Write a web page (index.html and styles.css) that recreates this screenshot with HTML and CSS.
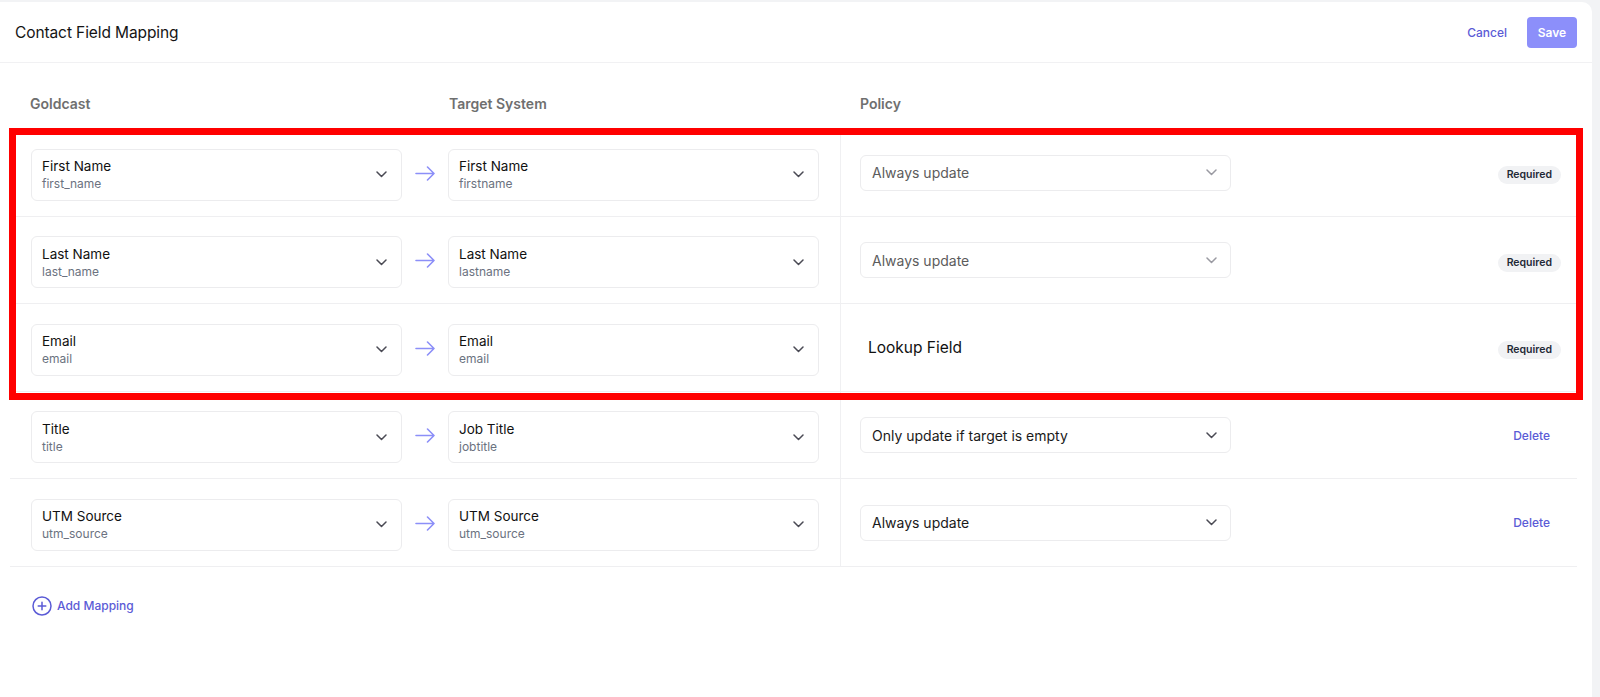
FILE: index.html
```html
<!DOCTYPE html>
<html lang="en">
<head>
<meta charset="utf-8">
<title>Contact Field Mapping</title>
<link rel="stylesheet" href="styles.css">
</head>
<body>
<div class="card">
  <header class="topbar">
    <h1 class="title">Contact Field Mapping</h1>
    <div class="actions">
      <button class="link-btn">Cancel</button>
      <button class="save-btn">Save</button>
    </div>
  </header>

  <section class="table">
    <div class="thead">
      <div class="th th-src">Goldcast</div>
      <div class="th th-tgt">Target System</div>
      <div class="th th-pol">Policy</div>
    </div>

    <div class="rows">
      <div class="highlight"></div>

      <div class="row">
        <div class="cell cell-src">
          <div class="select"><div class="sel-text"><div class="sel-main">First Name</div><div class="sel-sub">first_name</div></div><svg class="chev" width="11" height="7" viewBox="0 0 11 7"><path d="M1 1l4.5 4.5L10 1" /></svg></div>
        </div>
        <div class="cell cell-arrow"><svg class="arrow" width="21" height="15" viewBox="0 0 21 15"><path d="M1 7.5h18M12.5 1l6.5 6.5-6.5 6.5" /></svg></div>
        <div class="cell cell-tgt">
          <div class="select"><div class="sel-text"><div class="sel-main">First Name</div><div class="sel-sub">firstname</div></div><svg class="chev" width="11" height="7" viewBox="0 0 11 7"><path d="M1 1l4.5 4.5L10 1" /></svg></div>
        </div>
        <div class="cell cell-pol">
          <div class="policy-select muted"><span>Always update</span><svg class="chev light" width="11" height="7" viewBox="0 0 11 7"><path d="M1 1l4.5 4.5L10 1" /></svg></div>
          <span class="badge">Required</span>
        </div>
      </div>

      <div class="row">
        <div class="cell cell-src">
          <div class="select"><div class="sel-text"><div class="sel-main">Last Name</div><div class="sel-sub">last_name</div></div><svg class="chev" width="11" height="7" viewBox="0 0 11 7"><path d="M1 1l4.5 4.5L10 1" /></svg></div>
        </div>
        <div class="cell cell-arrow"><svg class="arrow" width="21" height="15" viewBox="0 0 21 15"><path d="M1 7.5h18M12.5 1l6.5 6.5-6.5 6.5" /></svg></div>
        <div class="cell cell-tgt">
          <div class="select"><div class="sel-text"><div class="sel-main">Last Name</div><div class="sel-sub">lastname</div></div><svg class="chev" width="11" height="7" viewBox="0 0 11 7"><path d="M1 1l4.5 4.5L10 1" /></svg></div>
        </div>
        <div class="cell cell-pol">
          <div class="policy-select muted"><span>Always update</span><svg class="chev light" width="11" height="7" viewBox="0 0 11 7"><path d="M1 1l4.5 4.5L10 1" /></svg></div>
          <span class="badge">Required</span>
        </div>
      </div>

      <div class="row">
        <div class="cell cell-src">
          <div class="select"><div class="sel-text"><div class="sel-main">Email</div><div class="sel-sub">email</div></div><svg class="chev" width="11" height="7" viewBox="0 0 11 7"><path d="M1 1l4.5 4.5L10 1" /></svg></div>
        </div>
        <div class="cell cell-arrow"><svg class="arrow" width="21" height="15" viewBox="0 0 21 15"><path d="M1 7.5h18M12.5 1l6.5 6.5-6.5 6.5" /></svg></div>
        <div class="cell cell-tgt">
          <div class="select"><div class="sel-text"><div class="sel-main">Email</div><div class="sel-sub">email</div></div><svg class="chev" width="11" height="7" viewBox="0 0 11 7"><path d="M1 1l4.5 4.5L10 1" /></svg></div>
        </div>
        <div class="cell cell-pol">
          <div class="lookup">Lookup Field</div>
          <span class="badge">Required</span>
        </div>
      </div>

      <div class="row">
        <div class="cell cell-src">
          <div class="select"><div class="sel-text"><div class="sel-main">Title</div><div class="sel-sub">title</div></div><svg class="chev" width="11" height="7" viewBox="0 0 11 7"><path d="M1 1l4.5 4.5L10 1" /></svg></div>
        </div>
        <div class="cell cell-arrow"><svg class="arrow" width="21" height="15" viewBox="0 0 21 15"><path d="M1 7.5h18M12.5 1l6.5 6.5-6.5 6.5" /></svg></div>
        <div class="cell cell-tgt">
          <div class="select"><div class="sel-text"><div class="sel-main">Job Title</div><div class="sel-sub">jobtitle</div></div><svg class="chev" width="11" height="7" viewBox="0 0 11 7"><path d="M1 1l4.5 4.5L10 1" /></svg></div>
        </div>
        <div class="cell cell-pol">
          <div class="policy-select"><span>Only update if target is empty</span><svg class="chev" width="11" height="7" viewBox="0 0 11 7"><path d="M1 1l4.5 4.5L10 1" /></svg></div>
          <button class="link-btn delete">Delete</button>
        </div>
      </div>

      <div class="row">
        <div class="cell cell-src">
          <div class="select"><div class="sel-text"><div class="sel-main">UTM Source</div><div class="sel-sub">utm_source</div></div><svg class="chev" width="11" height="7" viewBox="0 0 11 7"><path d="M1 1l4.5 4.5L10 1" /></svg></div>
        </div>
        <div class="cell cell-arrow"><svg class="arrow" width="21" height="15" viewBox="0 0 21 15"><path d="M1 7.5h18M12.5 1l6.5 6.5-6.5 6.5" /></svg></div>
        <div class="cell cell-tgt">
          <div class="select"><div class="sel-text"><div class="sel-main">UTM Source</div><div class="sel-sub">utm_source</div></div><svg class="chev" width="11" height="7" viewBox="0 0 11 7"><path d="M1 1l4.5 4.5L10 1" /></svg></div>
        </div>
        <div class="cell cell-pol">
          <div class="policy-select"><span>Always update</span><svg class="chev" width="11" height="7" viewBox="0 0 11 7"><path d="M1 1l4.5 4.5L10 1" /></svg></div>
          <button class="link-btn delete">Delete</button>
        </div>
      </div>
    </div>

    <div class="add-row">
      <button class="add-btn">
        <svg class="plus" width="20" height="20" viewBox="0 0 20 20"><circle cx="10" cy="10" r="9" /><path d="M10 6.2v7.6M6.2 10h7.6" /></svg>
        <span>Add Mapping</span>
      </button>
    </div>
  </section>
</div>
</body>
</html>
```

FILE: styles.css
```css
* { box-sizing: border-box; }

html, body {
  margin: 0;
  height: 100%;
}

body {
  background: #f2f3f5;
  padding: 2px 8px 0 0;
  font-family: Inter, "Noto Sans", "Liberation Sans", sans-serif;
  color: #111111;
}

button {
  font-family: inherit;
  border: 0;
  background: none;
  padding: 0;
  cursor: pointer;
}

.card {
  background: #ffffff;
  height: 695px;
  border-top-right-radius: 10px;
}

.topbar {
  height: 61px;
  border-bottom: 1px solid #f1f1f3;
  display: flex;
  align-items: center;
  justify-content: space-between;
  padding: 0 15px 0 15px;
}

.title {
  margin: 0;
  font-size: 15.5px;
  font-weight: 400;
  color: #141414;
  letter-spacing: -0.1px;
}

.actions {
  display: flex;
  align-items: center;
  gap: 20px;
}

.link-btn {
  color: #5b5bd6;
  font-size: 12px;
  font-weight: 500;
}

.save-btn {
  width: 50px;
  height: 31px;
  border-radius: 4px;
  background: #8c8ffa;
  color: #ffffff;
  font-size: 12px;
  font-weight: 600;
}

.table {
  margin: 0 15px 0 10px;
}

.thead {
  height: 66px;
  display: flex;
  padding-top: 32px;
  font-size: 14px;
  font-weight: 600;
  color: #6f6f6f;
  line-height: 17px;
}

.th-src { width: 439px; padding-left: 20px; }
.th-tgt { width: 411px; padding-left: 0; }
.th-pol { flex: 1; }

.rows {
  position: relative;
}

.highlight {
  position: absolute;
  left: -1px;
  top: -1px;
  width: 1574px;
  height: 272px;
  border: 7px solid #ff0000;
  pointer-events: none;
  z-index: 2;
}

.row {
  height: 87.5px;
  display: flex;
  align-items: stretch;
  border-bottom: 1px solid #efeff1;
  padding: 0 16px 0 21px;
}

.cell {
  display: flex;
  align-items: center;
}

.cell-src, .cell-tgt {
  width: 371px;
  padding-top: 5px;
}

.cell-arrow {
  width: 46px;
  justify-content: center;
  padding-top: 2px;
}

.cell-pol {
  flex: 1;
  margin-left: 21px;
  border-left: 1px solid #f0f0f2;
  padding: 1px 0 0 19px;
  justify-content: space-between;
}

.select {
  width: 371px;
  height: 52px;
  border: 1px solid #ececee;
  border-radius: 6px;
  display: flex;
  align-items: center;
  justify-content: space-between;
  padding: 0 14px 0 10px;
}

.sel-text {
  padding-top: 1px;
}

.sel-main {
  font-size: 13.5px;
  line-height: 17px;
  color: #111111;
}

.sel-sub {
  font-size: 12px;
  line-height: 17px;
  color: #6b7280;
}

.chev path {
  fill: none;
  stroke: #4b4b55;
  stroke-width: 1.5;
  stroke-linecap: round;
  stroke-linejoin: round;
}

.chev.light path { stroke: #9a9aa2; }

.arrow path {
  fill: none;
  stroke: #8c8ff8;
  stroke-width: 1.6;
  stroke-linecap: round;
  stroke-linejoin: round;
}

.policy-select {
  width: 371px;
  height: 36px;
  border: 1px solid #ececee;
  border-radius: 6px;
  display: flex;
  align-items: center;
  justify-content: space-between;
  padding: 0 13px 0 11px;
  font-size: 14px;
  color: #1a1a1a;
}

.policy-select.muted { color: #5c5c5c; }

.lookup {
  font-size: 15.5px;
  color: #111111;
  padding-left: 8px;
}

.badge {
  height: 18px;
  line-height: 18px;
  margin-top: 5px;
  padding: 0 9px;
  border-radius: 9px;
  background: #f1f2f4;
  color: #1f2937;
  font-size: 10.5px;
  font-weight: 600;
}

.delete {
  margin-right: 11px;
}

.add-row {
  padding: 29px 0 0 22px;
}

.add-btn {
  display: flex;
  align-items: center;
  gap: 5px;
  color: #5b5bd6;
  font-size: 12px;
  font-weight: 500;
}

.plus circle, .plus path {
  fill: none;
  stroke: #5b5bd6;
  stroke-width: 1.5;
  stroke-linecap: round;
}
```
